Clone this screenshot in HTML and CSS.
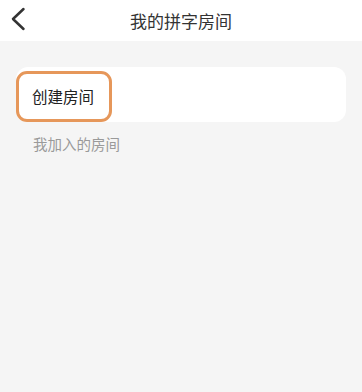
FILE: index.html
```html
<!DOCTYPE html>
<html lang="zh">
<head>
<meta charset="utf-8">
<link rel="stylesheet" href="styles.css">
</head>
<body>
<div class="page">
  <header class="nav">
    <svg class="back" width="16" height="24" viewBox="0 0 16 24"><path d="M13.5 2 L3 12 L13.5 22" fill="none" stroke="#333" stroke-width="2.5" stroke-linecap="round" stroke-linejoin="round"/></svg>
    <div class="title">我的拼字房间</div>
  </header>
  <main class="content">
    <div class="card">
      <div class="create">创建房间</div>
    </div>
    <div class="joined">我加入的房间</div>
  </main>
</div>
</body>
</html>
```
FILE: styles.css
```css
html, body {
  margin: 0;
  padding: 0;
  height: 100%;
}
body {
  font-family: "Noto Sans CJK SC", "Noto Sans", sans-serif;
  background: #f5f5f5;
}
.page {
  display: flex;
  flex-direction: column;
  min-height: 100%;
}
.nav {
  position: relative;
  height: 41px;
  background: #ffffff;
  display: flex;
  align-items: center;
  justify-content: center;
}
.back {
  position: absolute;
  left: 10px;
  top: 7px;
}
.title {
  font-size: 17px;
  color: #333333;
  line-height: 1;
}
.content {
  flex: 1;
  background: #f5f5f5;
  padding: 26px 16px 0 16px;
}
.card {
  background: #ffffff;
  border-radius: 12px;
  height: 55px;
  display: flex;
  align-items: center;
}
.create {
  box-sizing: border-box;
  width: 96px;
  height: 51px;
  border: 3.5px solid #e6975a;
  border-radius: 11px;
  display: flex;
  align-items: center;
  padding-left: 13px;
  font-size: 15.5px;
  color: #222222;
  margin-top: 3px;
}
.joined {
  margin-top: 12px;
  padding-left: 17px;
  font-size: 14.5px;
  color: #9a9a9a;
  line-height: 20px;
}
```
